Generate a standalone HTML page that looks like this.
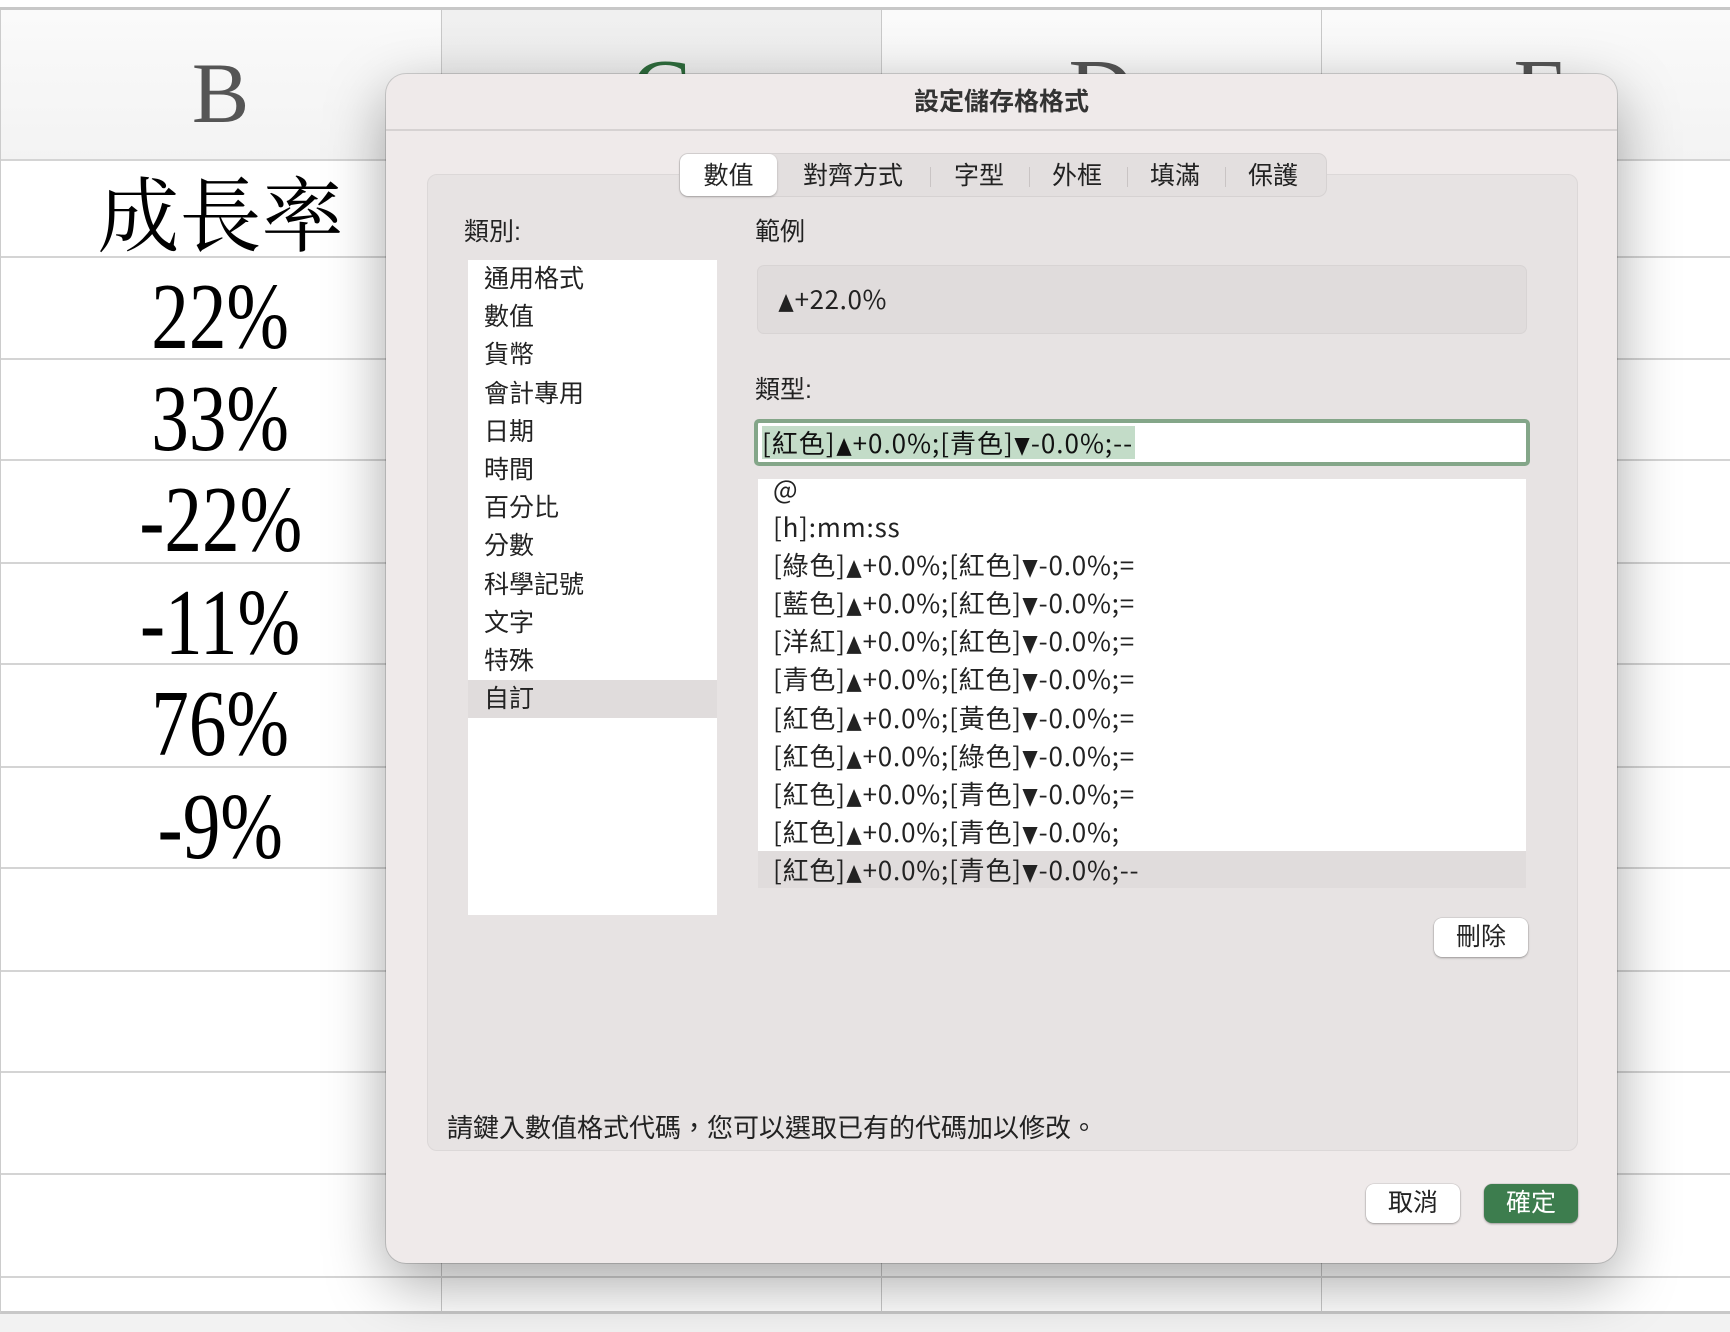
<!DOCTYPE html>
<html><head><meta charset="utf-8"><style>
*{margin:0;padding:0;box-sizing:border-box}
body{width:1730px;height:1332px;overflow:hidden;background:#fff;position:relative;font-family:"Liberation Sans","Noto Sans CJK TC",sans-serif;}
.abs{position:absolute}
.hl{position:absolute;left:0;width:1730px;height:2px;background:#d4d4d4}
.vl{position:absolute;width:1px;background:#c8c8c8}
.cell{position:absolute;left:0;width:441px;text-align:center;font-family:"Liberation Serif",serif;color:#000}
.pct{font-size:94px;display:inline-block;transform:scaleX(0.8);line-height:1}
.tab{position:absolute;top:0;height:44px;line-height:44px;font-size:25px;color:#222;text-align:center}
.sep{position:absolute;top:13px;width:1px;height:20px;background:#c9c4c4}
.cat div{height:38.2px;line-height:38.2px;padding-left:16px;font-size:25px;color:#222}
.lst .r{height:38.1px;line-height:38.1px;padding-left:15px;font-size:26px;letter-spacing:0.8px;color:#222;white-space:nowrap;font-family:"Noto Sans CJK TC",sans-serif}
.t{font-size:0.9em;font-family:"DejaVu Sans",sans-serif;display:inline-block;transform:scaleX(.85);margin:0 -1px;vertical-align:0}
.btn{position:absolute;height:39px;border-radius:8px;background:#fff;box-shadow:0 1px 2px rgba(0,0,0,.3),0 0 0 .5px rgba(0,0,0,.12);font-size:25px;text-align:center;line-height:39px;color:#222}
</style></head><body>
<div class="abs" style="left:0;top:0;width:1730px;height:9px;background:#fff"></div>
<div class="abs" style="left:0;top:7px;width:1730px;height:3px;background:#c8c8c8"></div>
<div class="abs" style="left:0;top:10px;width:1730px;height:150px;background:linear-gradient(#fafafa,#f3f3f3)"></div>
<div class="abs" style="left:441px;top:10px;width:440px;height:150px;background:linear-gradient(#f0f0f0,#e9e9e9)"></div>
<div class="vl" style="left:441px;top:10px;height:1303px"></div>
<div class="vl" style="left:881px;top:10px;height:1303px"></div>
<div class="vl" style="left:1321px;top:10px;height:1303px"></div>
<div class="hl" style="top:159px"></div>
<div class="hl" style="top:256px"></div>
<div class="hl" style="top:358px"></div>
<div class="hl" style="top:459px"></div>
<div class="hl" style="top:562px"></div>
<div class="hl" style="top:663px"></div>
<div class="hl" style="top:766px"></div>
<div class="hl" style="top:867px"></div>
<div class="hl" style="top:970px"></div>
<div class="hl" style="top:1071px"></div>
<div class="hl" style="top:1173px"></div>
<div class="hl" style="top:1276px"></div>
<div class="hl" style="top:1311px;height:3px;background:#c8c8c8"></div>
<div class="abs" style="left:0;top:1314px;width:1730px;height:18px;background:#f2f2f2"></div>
<div class="abs" style="left:0;top:10px;width:1px;height:1303px;background:#ccc"></div>
<div class="cell" style="top:50px;font-size:86px;color:#555;line-height:1">B</div>
<div class="cell" style="top:47px;left:441px;width:440px;font-size:90px;color:#2e6b3c;line-height:1">C</div>
<div class="cell" style="top:47px;left:881px;width:440px;font-size:90px;color:#555;line-height:1">D</div>
<div class="cell" style="top:47px;left:1321px;width:440px;font-size:90px;color:#555;line-height:1">E</div>
<div class="cell" style="top:177px;font-size:82px;line-height:1;font-family:'Liberation Serif','Noto Serif CJK SC',serif">成長率</div>
<div class="cell" style="top:270px"><span class="pct">22%</span></div>
<div class="cell" style="top:372px"><span class="pct">33%</span></div>
<div class="cell" style="top:473px"><span class="pct">-22%</span></div>
<div class="cell" style="top:576px"><span class="pct">-11%</span></div>
<div class="cell" style="top:677px"><span class="pct">76%</span></div>
<div class="cell" style="top:780px"><span class="pct">-9%</span></div>

<div class="abs" style="left:386px;top:74px;width:1231px;height:1189px;border-radius:20px;background:#efeaea;box-shadow:0 20px 60px rgba(0,0,0,.35),0 0 0 1px rgba(0,0,0,.15)">
  <div class="abs" style="left:0;top:0;width:100%;height:56px;text-align:center;line-height:56px;font-size:25px;font-weight:bold;color:#333">設定儲存格格式</div>
  <div class="abs" style="left:0;top:55px;width:100%;height:2px;background:#d6d2d2"></div>
  <div class="abs" style="left:41px;top:100px;width:1151px;height:977px;border-radius:10px;background:#e7e3e3;border:1px solid #dcd8d8"></div>
  <div class="abs" style="left:293px;top:79px;width:648px;height:44px;border-radius:9px;background:#e3dfdf;border:1px solid #d6d2d2">
    <div class="abs" style="left:0;top:0;width:97px;height:42px;border-radius:8px;background:#fff;box-shadow:0 1px 2px rgba(0,0,0,.25)"></div>
    <div class="tab" style="left:0;width:97px">數值</div>
    <div class="tab" style="left:102px;width:142px">對齊方式</div>
    <div class="sep" style="left:250px"></div>
    <div class="tab" style="left:258px;width:82px">字型</div>
    <div class="sep" style="left:349px"></div>
    <div class="tab" style="left:355px;width:84px">外框</div>
    <div class="sep" style="left:447px"></div>
    <div class="tab" style="left:453px;width:84px">填滿</div>
    <div class="sep" style="left:545px"></div>
    <div class="tab" style="left:551px;width:84px">保護</div>
  </div>
  <div class="abs" style="left:78px;top:138px;font-size:25px;color:#222">類別:</div>
  <div class="abs" style="left:369px;top:138px;font-size:25px;color:#222">範例</div>
  <div class="abs cat" style="left:82px;top:186px;width:249px;height:655px;background:#fff">
    <div>通用格式</div><div>數值</div><div>貨幣</div><div>會計專用</div><div>日期</div><div>時間</div><div>百分比</div><div>分數</div><div>科學記號</div><div>文字</div><div>特殊</div><div style="background:#e0dcdc">自訂</div>
  </div>
  <div class="abs" style="left:371px;top:191px;width:770px;height:69px;border-radius:7px;background:#e0dcdc;border:1px solid #d8d4d4;font-size:26px;letter-spacing:0.6px;line-height:65px;padding-left:19px;color:#222;font-family:'Noto Sans CJK TC',sans-serif"><span class="t" style="margin-left:0">▲</span>+22.0%</div>
  <div class="abs" style="left:369px;top:296px;font-size:25px;color:#222">類型:</div>
  <div class="abs" style="left:368px;top:345px;width:776px;height:47px;border-radius:5px;border:4px solid #84a689;background:#fff">
    <div class="abs" style="left:4px;top:3px;height:33px;line-height:33px;font-size:26px;letter-spacing:1px;color:#111;background:#c3dcc8;white-space:nowrap;padding-right:2px;font-family:'Noto Sans CJK TC',sans-serif">[紅色]<span class="t">▲</span>+0.0%;[青色]<span class="t">▼</span>-0.0%;--</div>
  </div>
  <div class="abs lst" style="left:372px;top:405px;width:768px;height:409px;background:#fff;overflow:hidden">
   <div style="margin-top:-9px">
    <div class="r">@</div><div class="r">[h]:mm:ss</div><div class="r">[綠色]<span class="t">▲</span>+0.0%;[紅色]<span class="t">▼</span>-0.0%;=</div><div class="r">[藍色]<span class="t">▲</span>+0.0%;[紅色]<span class="t">▼</span>-0.0%;=</div><div class="r">[洋紅]<span class="t">▲</span>+0.0%;[紅色]<span class="t">▼</span>-0.0%;=</div><div class="r">[青色]<span class="t">▲</span>+0.0%;[紅色]<span class="t">▼</span>-0.0%;=</div><div class="r">[紅色]<span class="t">▲</span>+0.0%;[黃色]<span class="t">▼</span>-0.0%;=</div><div class="r">[紅色]<span class="t">▲</span>+0.0%;[綠色]<span class="t">▼</span>-0.0%;=</div><div class="r">[紅色]<span class="t">▲</span>+0.0%;[青色]<span class="t">▼</span>-0.0%;=</div><div class="r">[紅色]<span class="t">▲</span>+0.0%;[青色]<span class="t">▼</span>-0.0%;</div><div class="r" style="background:#e0dcdc">[紅色]<span class="t">▲</span>+0.0%;[青色]<span class="t">▼</span>-0.0%;--</div>
   </div>
  </div>
  <div class="btn" style="left:1048px;top:844px;width:94px">刪除</div>
  <div class="abs" style="left:61px;top:1034px;font-size:26px;color:#222">請鍵入數值格式代碼，您可以選取已有的代碼加以修改。</div>
  <div class="btn" style="left:980px;top:1110px;width:94px">取消</div>
  <div class="btn" style="left:1098px;top:1110px;width:94px;background:#3d7d4e;color:#fff">確定</div>
</div>
</body></html>
